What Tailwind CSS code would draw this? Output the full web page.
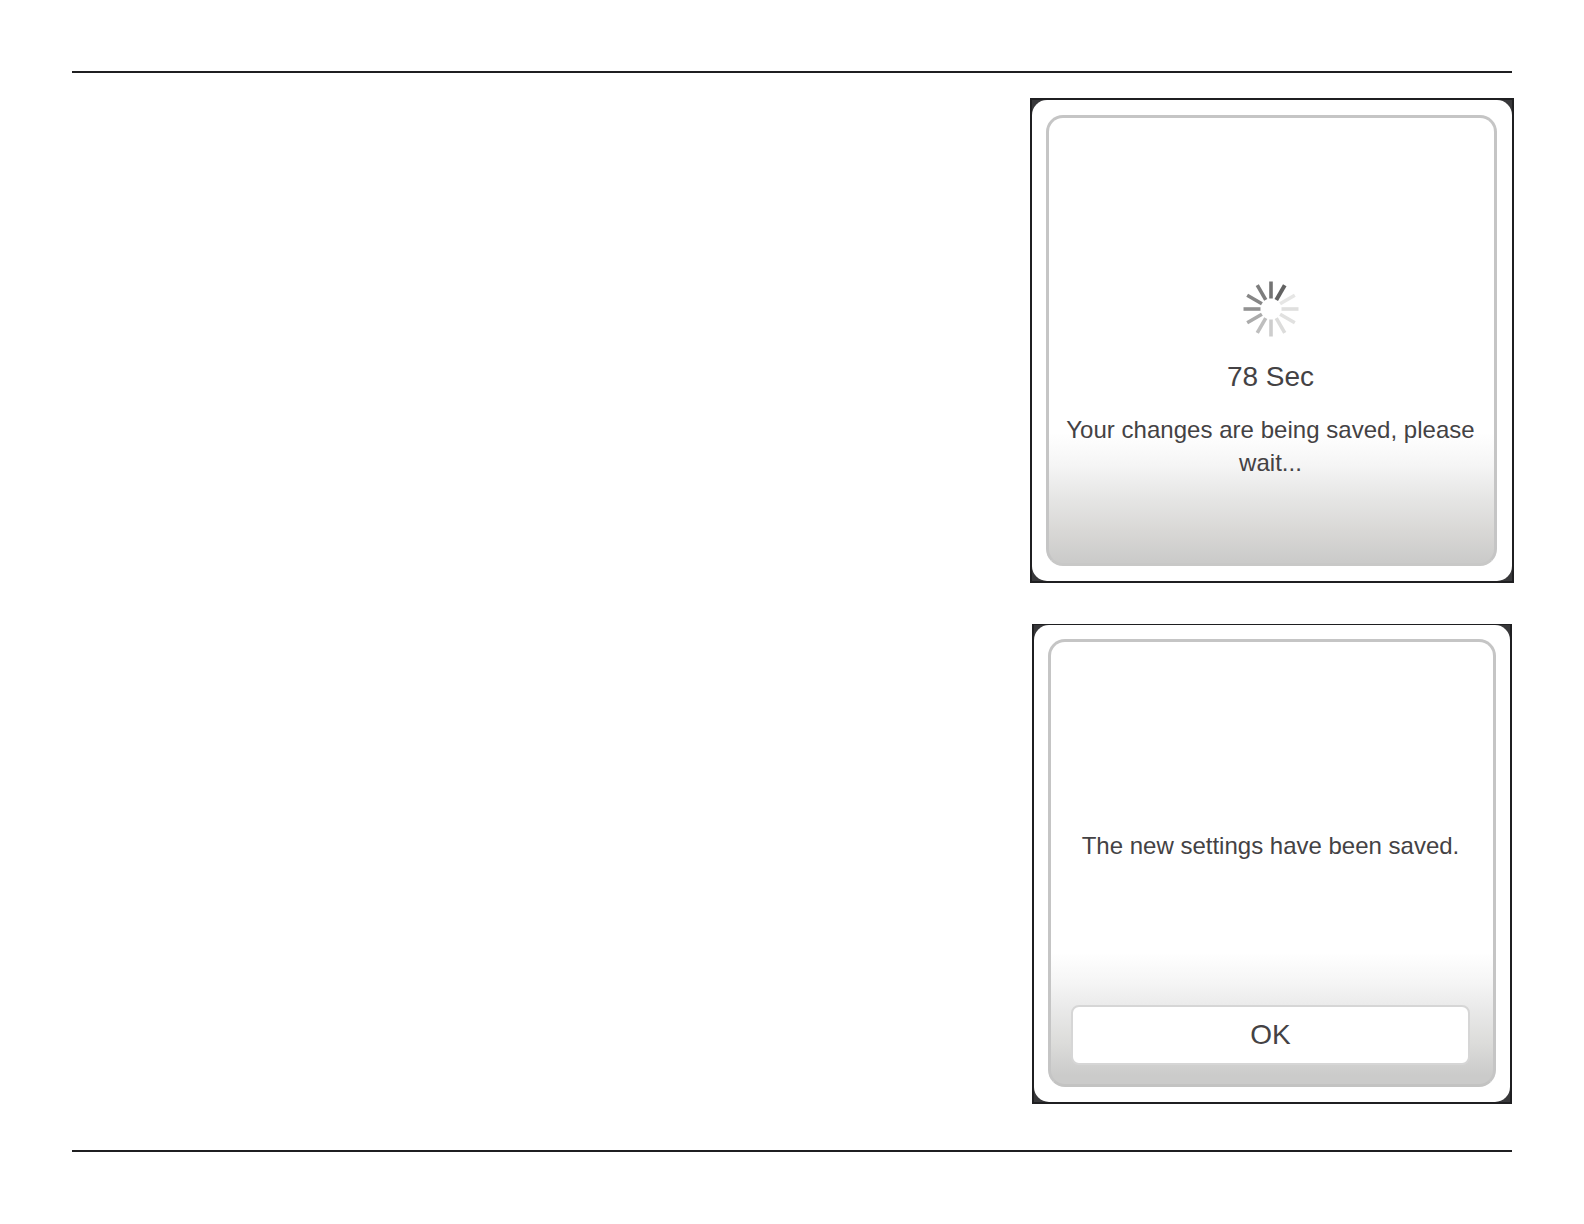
<!doctype html>
<html lang="en">
  <head>
    <meta charset="UTF-8" />
    <meta name="viewport" content="width=device-width, initial-scale=1.0" />
    <script src="https://cdn.jsdelivr.net/npm/@tailwindcss/browser@4"></script>
    <title>Saving settings</title>
  </head>
  <body class="h-screen overflow-hidden bg-white px-[72px] pt-[71px] font-['Liberation_Sans',Arial,sans-serif] text-[#444244]">
    <main class="flex h-[1081px] w-[1440px] flex-col items-end border-y-2 border-[#1f1f21]">
      <!-- Saving -->
      <section class="-mr-[2px] mt-[25px] h-[485px] w-[484px] shrink-0 border-2 border-[#1f1f21] bg-[#38383a]">
        <div class="h-full rounded-[15px] bg-white pt-[15px] pr-[15px] pb-[15px] pl-[14px]">
          <div class="flex h-full flex-col items-center rounded-[17px] border-3 border-[#c5c5c5] border-b-[#c8c8c7] bg-[linear-gradient(to_bottom,#fff_318px,#f5f5f5_350px,#e5e5e4_385px,#d9d8d6_415px,#cbcbca_446px)] bg-origin-border pt-[161px] pr-[2px]">
            <svg class="size-[60px]" viewBox="-30 -30 60 60" stroke-width="3.6">
              <path d="M0-10.5V-27.5" stroke="#737373" />
              <path d="M0-10.5V-27.5" stroke="#626262" stroke-width="4" transform="rotate(30)" />
              <path d="M0-10.5V-27.5" stroke="#e6e6e5" transform="rotate(60)" />
              <path d="M0-10.5V-27.5" stroke="#dfdfde" transform="rotate(90)" />
              <path d="M0-10.5V-27.5" stroke="#e1e1e0" transform="rotate(120)" />
              <path d="M0-10.5V-27.5" stroke="#dcdcdb" transform="rotate(150)" />
              <path d="M0-10.5V-27.5" stroke="#cdcdcd" transform="rotate(180)" />
              <path d="M0-10.5V-27.5" stroke="#bebebe" transform="rotate(210)" />
              <path d="M0-10.5V-27.5" stroke="#ababab" transform="rotate(240)" />
              <path d="M0-10.5V-27.5" stroke="#929292" transform="rotate(270)" />
              <path d="M0-10.5V-27.5" stroke="#868686" transform="rotate(300)" />
              <path d="M0-10.5V-27.5" stroke="#7d7d7d" transform="rotate(330)" />
            </svg>
            <p class="mt-[22px] text-[28px] leading-[32px]">78 Sec</p>
            <p class="mt-5 px-3 text-center text-2xl leading-[33px] tracking-[0.03px]">Your changes are being saved, please wait...</p>
          </div>
        </div>
      </section>

      <!-- Saved -->
      <section class="mt-[41px] h-[480px] w-[480px] shrink-0 border-2 border-t border-[#1f1f21] bg-[#38383a]">
        <div class="h-full rounded-[15px] bg-white pt-[14px] pr-[14px] pb-[15px] pl-[14px]">
          <div class="flex h-full flex-col items-center rounded-[17px] border-3 border-[#c5c5c5] border-b-[#c3c3c2] bg-[linear-gradient(to_bottom,#fff_314px,#f5f5f5_344px,#ebebeb_366px,#dcdcda_404px,#cbcbca_436px)] bg-origin-border pt-[187px] pr-[3px]">
            <p class="text-2xl leading-[33px]">The new settings have been saved.</p>
            <button type="button" class="mt-[143px] h-[60px] w-[399px] rounded-lg border-2 border-[#d6d6d6] bg-white text-[28px] leading-none">OK</button>
          </div>
        </div>
      </section>
    </main>
  </body>
</html>
